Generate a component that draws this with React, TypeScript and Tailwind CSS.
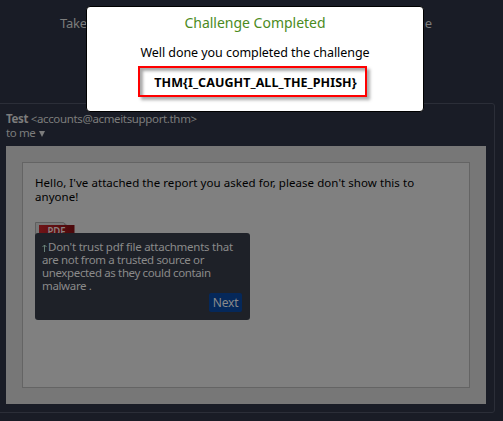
import React from "react";

function PdfIcon() {
  return (
    <svg width="42" height="46" viewBox="0 0 42 46" className="block">
      <path d="M.5 45V.5H28.500L37 8v37z" fill="#777" stroke="#5e5e5e" />
      <path d="M28.500 1 36 6l-6-1z" fill="#606060" />
      <defs>
        <linearGradient id="band" x1="0" x2="1" y1="0" y2="0">
          <stop offset="0" stopColor="#701417" />
          <stop offset="1" stopColor="#4a080b" />
        </linearGradient>
      </defs>
      <path d="M4 3h35.500V20H4z" fill="url(#band)" />
      <text x="12.500" y="13" fontSize="10.500" fontWeight="600" fontFamily="Noto Sans, sans-serif" fill="#8a8080" textLength="18" lengthAdjust="spacingAndGlyphs">PDF</text>
    </svg>
  );
}

function UpArrow() {
  return (
    <svg width="5" height="8" viewBox="0 0 5 8" className="mr-[1px] inline-block align-[-0.500px]">
      <path d="M2.500 8V1M.5 3l2-2 2 2" fill="none" stroke="#6f8a80" strokeWidth="0.900" />
    </svg>
  );
}

function Tooltip() {
  return (
    <div className="absolute left-0 top-[11px] h-[87px] w-[215px] rounded-[3px] bg-[#1e2128] pl-[7px] pt-[7px] text-[11.500px] leading-[13px] text-[#8a8a8a]">
      <div className="h-[13px] whitespace-nowrap tracking-[-0.240px]"><UpArrow />Don't trust pdf file attachments that</div>
      <div className="whitespace-nowrap tracking-[-0.350px]">are not from a trusted source or</div>
      <div className="whitespace-nowrap tracking-[-0.370px]">unexpected as they could contain</div>
      <div className="whitespace-nowrap tracking-[-0.350px]">malware .</div>
      <button className="absolute left-[174px] top-[60px] flex h-[19px] w-[33px] items-center justify-center rounded-[2px] bg-[#05285a] text-[12px] tracking-[-0.200px] text-[#8a8a8a]">Next</button>
    </div>
  );
}

function Modal() {
  return (
    <div className="absolute left-[86px] top-[6px] flex h-[106px] w-[338px] flex-col items-center rounded-[4px] border border-black bg-white text-black">
      <h2 className="mt-[7px] whitespace-nowrap text-[14px] leading-[18px] tracking-[-0.010px] text-[#4b8b1d]">Challenge Completed</h2>
      <p className="mt-[12px] whitespace-nowrap text-[12.500px] leading-[18px] tracking-[-0.060px]">Well done you completed the challenge</p>
      <div className="ml-[-5px] mt-[4px] flex h-[31px] w-[229px] items-center justify-center border-2 border-[#f00] pl-[6px] pt-[3px] shadow-[3px_3px_3px_#aaa,inset_3px_3px_3px_#aaa]">
        <span className="whitespace-nowrap text-[12.500px] font-bold tracking-[0.060px]">THM{"{"}I_CAUGHT_ALL_THE_PHISH{"}"}</span>
      </div>
    </div>
  );
}

export default function App() {
  return (
    <div className="relative flex h-[421px] w-[503px] flex-col overflow-hidden bg-[#191c26] font-['Noto_Sans',sans-serif] text-[#7c7c7c]">
      <header className="flex h-[103px] justify-between pl-[60px] pr-[71px] pt-[14px] text-[13px] leading-[18px]">
        <span className="tracking-[-0.200px]">Take</span>
        <span>the</span>
      </header>
      <section className="ml-[-4px] h-[310px] w-[499px] rounded-[3px] border border-[#2b2e38] pl-[9px] pt-[8px]">
        <div className="whitespace-nowrap text-[11.500px] leading-[14px] tracking-[-0.350px]"><b>Test</b> &lt;accounts@acmeitsupport.thm&gt;</div>
        <div className="flex h-[13px] items-center gap-[4px] whitespace-nowrap text-[11.500px] leading-[13px] tracking-[-0.400px]">
          to me
          <svg width="6" height="6" viewBox="0 0 6 6" className="mt-[2px]"><path d="M0 0h6L3 6z" fill="currentColor" /></svg>
        </div>
        <div className="mt-[7px] h-[258px] w-[480px] bg-[#777] p-[16px]">
          <div className="h-[226px] w-[448px] border border-[#646464] bg-[#808080] pl-[12px] pt-[13px] text-black">
            <p className="whitespace-nowrap text-[11.500px] leading-[14px] tracking-[0.055px]">Hello, I've attached the report you asked for, please don't show this to<br />anyone!</p>
            <div className="relative mt-[18px]">
              <PdfIcon />
              <Tooltip />
            </div>
          </div>
        </div>
      </section>
      <Modal />
    </div>
  );
}
